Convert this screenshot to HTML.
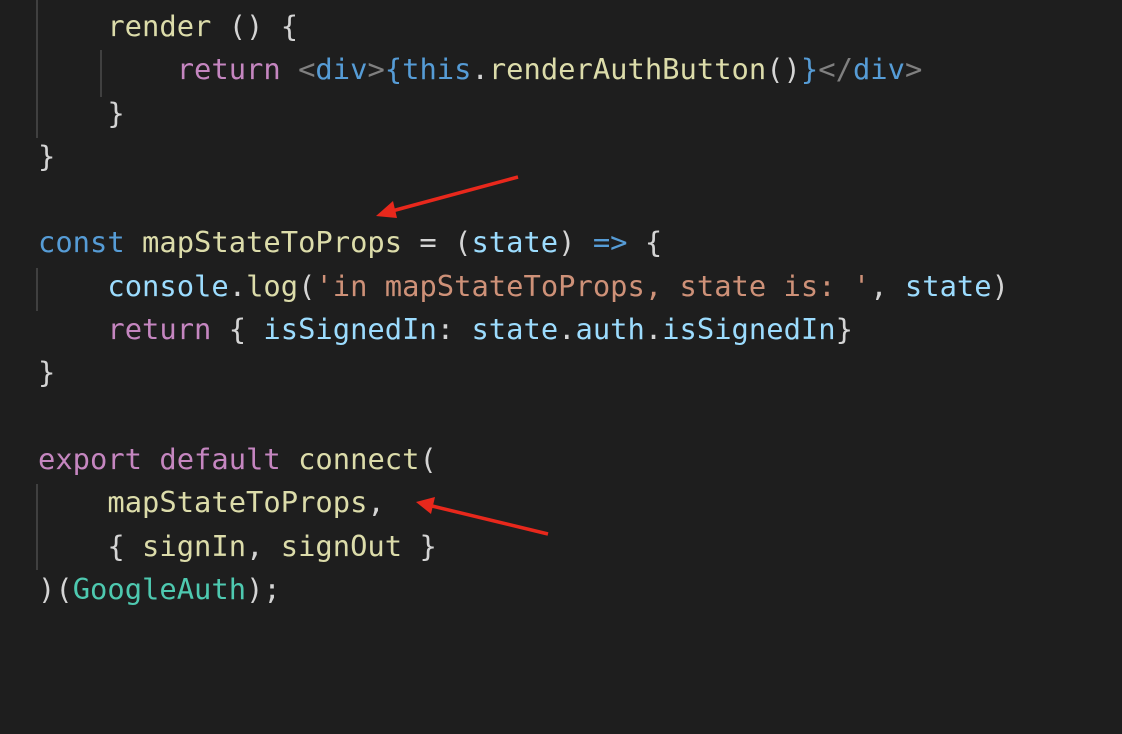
<!DOCTYPE html>
<html><head><meta charset="utf-8"><style>
html,body{margin:0;padding:0;background:#1e1e1e;width:1122px;height:734px;overflow:hidden;position:relative}
.code{position:absolute;left:38px;top:5px;font-family:"DejaVu Sans Mono","Liberation Mono",monospace;font-size:28.8px;line-height:43.3px;color:#d4d4d4;white-space:pre}
.k{color:#c586c0}.b{color:#569cd6}.f{color:#dcdcaa}.v{color:#9cdcfe}.s{color:#ce9178}.c{color:#4ec9b0}.g{color:#808080}
.guide{position:absolute;width:2px;background:#404040}
</style></head><body>
<div class="guide" style="left:36px;top:0;height:138px"></div>
<div class="guide" style="left:100px;top:50px;height:47px"></div>
<div class="guide" style="left:36px;top:268px;height:43px"></div>
<div class="guide" style="left:36px;top:484px;height:86px"></div>
<div class="code"><span class="f">    render</span> () {
        <span class="k">return</span> <span class="g">&lt;</span><span class="b">div</span><span class="g">&gt;</span><span class="b">{this</span>.<span class="f">renderAuthButton</span>()<span class="b">}</span><span class="g">&lt;/</span><span class="b">div</span><span class="g">&gt;</span>
    }
}

<span class="b">const</span> <span class="f">mapStateToProps</span> = (<span class="v">state</span>) <span class="b">=&gt;</span> {
    <span class="v">console</span>.<span class="f">log</span>(<span class="s">'in mapStateToProps, state is: '</span>, <span class="v">state</span>)
    <span class="k">return</span> { <span class="v">isSignedIn</span>: <span class="v">state</span>.<span class="v">auth</span>.<span class="v">isSignedIn</span>}
}

<span class="k">export</span> <span class="k">default</span> <span class="f">connect</span>(
    <span class="f">mapStateToProps</span>,
    { <span class="f">signIn</span>, <span class="f">signOut</span> }
)(<span class="c">GoogleAuth</span>);</div>
<svg width="1122" height="734" style="position:absolute;left:0;top:0">
<line x1="518" y1="177" x2="392" y2="211" stroke="#e8281c" stroke-width="3.5"/>
<polygon points="376,216 393,201 397,218" fill="#e8281c"/>
<line x1="548" y1="534" x2="432" y2="506" stroke="#e8281c" stroke-width="3.5"/>
<polygon points="416,502 435,497 431,514" fill="#e8281c"/>
</svg>
</body></html>
